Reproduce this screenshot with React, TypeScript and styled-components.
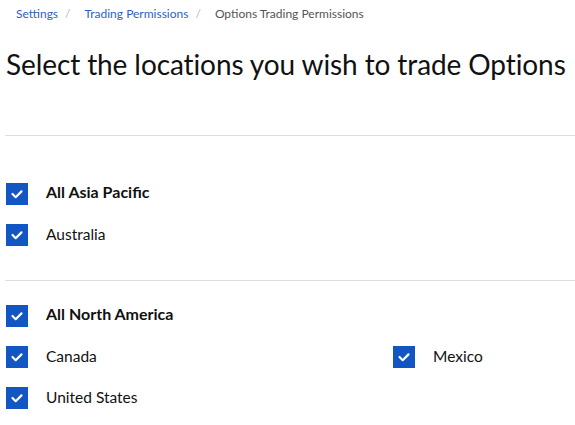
import styled, { createGlobalStyle } from "styled-components";

const GlobalStyle = createGlobalStyle`
  body {
    margin: 0;
    background: #ffffff;
    font-family: "Lato", "Open Sans", sans-serif;
    color: #111111;
  }
`;

const Page = styled.div`
  padding: 0 0 0 6px;
  width: 569px;
`;

const Breadcrumbs = styled.nav`
  display: flex;
  align-items: center;
  height: 26px;
  padding-left: 10px;
  font-size: 12px;
`;

const Crumb = styled.a<{ $current?: boolean }>`
  color: ${(p) => (p.$current ? "#555555" : "#2d62c4")};
  text-decoration: none;
`;

const Sep = styled.span`
  color: #b8b8b8;
  margin: 0 14px 0 7px;
`;

const Title = styled.h1`
  margin: 20px 0 0;
  font-size: 28px;
  font-weight: 400;
  line-height: 36px;
  letter-spacing: -0.1px;
  color: #111111;
`;

const Divider = styled.hr<{ $top: number }>`
  border: none;
  border-top: 1px solid #dddddd;
  margin: ${(p) => p.$top}px 0 0 -1px;
`;

const Group = styled.div<{ $top: number }>`
  display: grid;
  grid-template-columns: 387px 1fr;
  row-gap: 19px;
  margin-top: ${(p) => p.$top}px;
`;

const Item = styled.label<{ $full?: boolean }>`
  display: flex;
  align-items: center;
  gap: 18px;
  height: 22px;
  grid-column: ${(p) => (p.$full ? "1 / -1" : "auto")};
`;

const Box = styled.span`
  width: 22px;
  height: 22px;
  background: #1256c4;
  display: flex;
  align-items: center;
  justify-content: center;
  flex-shrink: 0;
`;

const Text = styled.span<{ $bold?: boolean }>`
  font-size: ${(p) => (p.$bold ? "16px" : "15.5px")};
  font-weight: ${(p) => (p.$bold ? 700 : 400)};
  padding-bottom: ${(p) => (p.$bold ? "5px" : "3px")};
  color: #111111;
`;

function Check() {
  return (
    <svg width="22" height="22" viewBox="0 0 22 22">
      <path d="M6.5 11 L9.7 14.2 L15.5 8.4" fill="none" stroke="#ffffff" strokeWidth="2.2" strokeLinecap="round" strokeLinejoin="round" />
    </svg>
  );
}

function Option({ label, bold, full }: { label: string; bold?: boolean; full?: boolean }) {
  return (
    <Item $full={full}>
      <Box>
        <Check />
      </Box>
      <Text $bold={bold}>{label}</Text>
    </Item>
  );
}

export default function App() {
  return (
    <Page>
      <GlobalStyle />
      <Breadcrumbs>
        <Crumb href="#">Settings</Crumb>
        <Sep>/</Sep>
        <Crumb href="#">Trading Permissions</Crumb>
        <Sep>/</Sep>
        <Crumb $current>Options Trading Permissions</Crumb>
      </Breadcrumbs>
      <Title>Select the locations you wish to trade Options</Title>
      <Divider $top={53} />
      <Group $top={47}>
        <Option label="All Asia Pacific" bold full />
        <Option label="Australia" full />
      </Group>
      <Divider $top={34} />
      <Group $top={24}>
        <Option label="All North America" bold full />
        <Option label="Canada" />
        <Option label="Mexico" />
        <Option label="United States" />
      </Group>
    </Page>
  );
}
